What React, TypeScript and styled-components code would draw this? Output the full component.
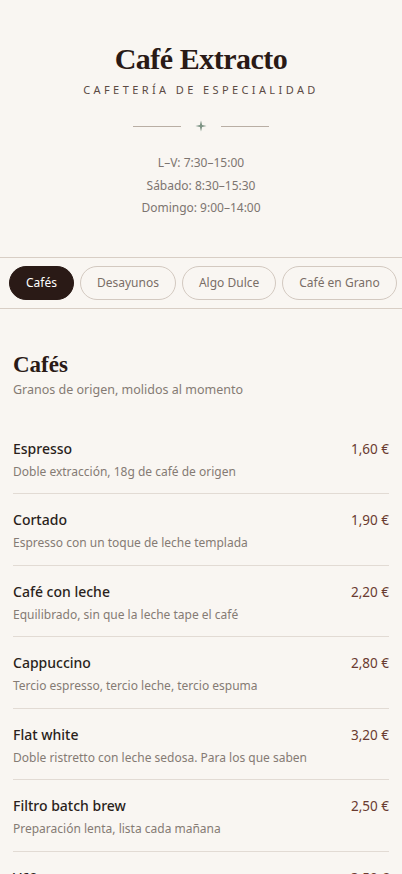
import React, { useState } from 'react';
import styled, { createGlobalStyle } from 'styled-components';

const GlobalStyle = createGlobalStyle`
  html, body {
    margin: 0;
    padding: 0;
    background: #f9f6f2;
  }
  body {
    font-family: 'Noto Sans', 'Open Sans', sans-serif;
    color: #2a1f1b;
  }
  * { box-sizing: border-box; }
`;

const Page = styled.div`
  width: 100%;
  min-height: 100vh;
  background: #f9f6f2;
`;

const Header = styled.header`
  padding: 42px 16px 37px;
  text-align: center;
`;

const Title = styled.h1`
  margin: 0;
  font-family: 'Liberation Serif', 'DejaVu Serif', serif;
  font-weight: 700;
  font-size: 30px;
  line-height: 34px;
  letter-spacing: -0.5px;
  color: #2a1a16;
`;

const Tagline = styled.div`
  margin-top: 6px;
  font-size: 11px;
  line-height: 16px;
  letter-spacing: 3.4px;
  color: #5b4a44;
`;

const Divider = styled.div`
  margin: 22px auto 0;
  display: flex;
  align-items: center;
  justify-content: center;
  gap: 14px;
`;

const Rule = styled.span`
  width: 48px;
  height: 1px;
  background: #b9aea4;
`;

const Star = styled.svg`
  width: 12px;
  height: 12px;
  display: block;
`;

const Hours = styled.div`
  margin-top: 20px;
  font-size: 12px;
  line-height: 22.5px;
  color: #7d7570;
`;

const Tabs = styled.nav`
  display: flex;
  gap: 6px;
  padding: 8px 9px;
  border-top: 1px solid #d8cec5;
  border-bottom: 1px solid #d8cec5;
  overflow-x: auto;
  white-space: nowrap;
  scrollbar-width: none;
  &::-webkit-scrollbar { display: none; }
`;

const Tab = styled.button<{ $active: boolean }>`
  flex: none;
  height: 34px;
  padding: 0 16px;
  border-radius: 18px;
  font-family: 'Noto Sans', 'Open Sans', sans-serif;
  font-size: 12px;
  cursor: pointer;
  border: 1px solid ${(p) => (p.$active ? '#2a1a16' : '#d3c9c0')};
  background: ${(p) => (p.$active ? '#2a1a16' : 'transparent')};
  color: ${(p) => (p.$active ? '#ffffff' : '#7a6e67')};
`;

const Section = styled.section`
  padding: 42px 13px 0;
`;

const SectionTitle = styled.h2`
  margin: 0;
  font-family: 'Liberation Serif', 'DejaVu Serif', serif;
  font-weight: 700;
  font-size: 23px;
  line-height: 28px;
  color: #2a1a16;
`;

const SectionNote = styled.p`
  margin: 2px 0 0;
  font-size: 12.5px;
  line-height: 18px;
  color: #857b74;
`;

const List = styled.ul`
  list-style: none;
  margin: 24px 0 0;
  padding: 0;
`;

const Item = styled.li`
  padding: 16px 0 12.5px;
  border-bottom: 1px solid #e2dbd4;
`;

const ItemTop = styled.div`
  display: flex;
  justify-content: space-between;
  align-items: baseline;
`;

const ItemName = styled.span`
  font-size: 14px;
  line-height: 20px;
  font-weight: 500;
  color: #2a1f1b;
`;

const Price = styled.span`
  font-size: 13.5px;
  line-height: 20px;
  color: #6a3b30;
`;

const ItemDesc = styled.div`
  margin-top: 4px;
  font-size: 12px;
  line-height: 18px;
  color: #857b74;
`;

const tabs = ['Cafés', 'Desayunos', 'Algo Dulce', 'Café en Grano', 'Bebidas'];

const items = [
  { name: 'Espresso', price: '1,60 €', desc: 'Doble extracción, 18g de café de origen' },
  { name: 'Cortado', price: '1,90 €', desc: 'Espresso con un toque de leche templada' },
  { name: 'Café con leche', price: '2,20 €', desc: 'Equilibrado, sin que la leche tape el café' },
  { name: 'Cappuccino', price: '2,80 €', desc: 'Tercio espresso, tercio leche, tercio espuma' },
  { name: 'Flat white', price: '3,20 €', desc: 'Doble ristretto con leche sedosa. Para los que saben' },
  { name: 'Filtro batch brew', price: '2,50 €', desc: 'Preparación lenta, lista cada mañana' },
  { name: 'V60 a mano', price: '3,50 €', desc: 'Café de especialidad preparado al momento' },
];

const App: React.FC = () => {
  const [active, setActive] = useState(0);

  return (
    <Page>
      <GlobalStyle />
      <Header>
        <Title>Café Extracto</Title>
        <Tagline>CAFETERÍA DE ESPECIALIDAD</Tagline>
        <Divider>
          <Rule />
          <Star viewBox="0 0 12 12">
            <path d="M6 0.5 L7.1 4.9 L11.5 6 L7.1 7.1 L6 11.5 L4.9 7.1 L0.5 6 L4.9 4.9 Z" fill="#7d9384" />
          </Star>
          <Rule />
        </Divider>
        <Hours>
          <div>L–V: 7:30–15:00</div>
          <div>Sábado: 8:30–15:30</div>
          <div>Domingo: 9:00–14:00</div>
        </Hours>
      </Header>

      <Tabs>
        {tabs.map((t, i) => (
          <Tab key={t} $active={i === active} onClick={() => setActive(i)}>
            {t}
          </Tab>
        ))}
      </Tabs>

      <Section>
        <SectionTitle>Cafés</SectionTitle>
        <SectionNote>Granos de origen, molidos al momento</SectionNote>
        <List>
          {items.map((it) => (
            <Item key={it.name}>
              <ItemTop>
                <ItemName>{it.name}</ItemName>
                <Price>{it.price}</Price>
              </ItemTop>
              <ItemDesc>{it.desc}</ItemDesc>
            </Item>
          ))}
        </List>
      </Section>
    </Page>
  );
};

export default App;
